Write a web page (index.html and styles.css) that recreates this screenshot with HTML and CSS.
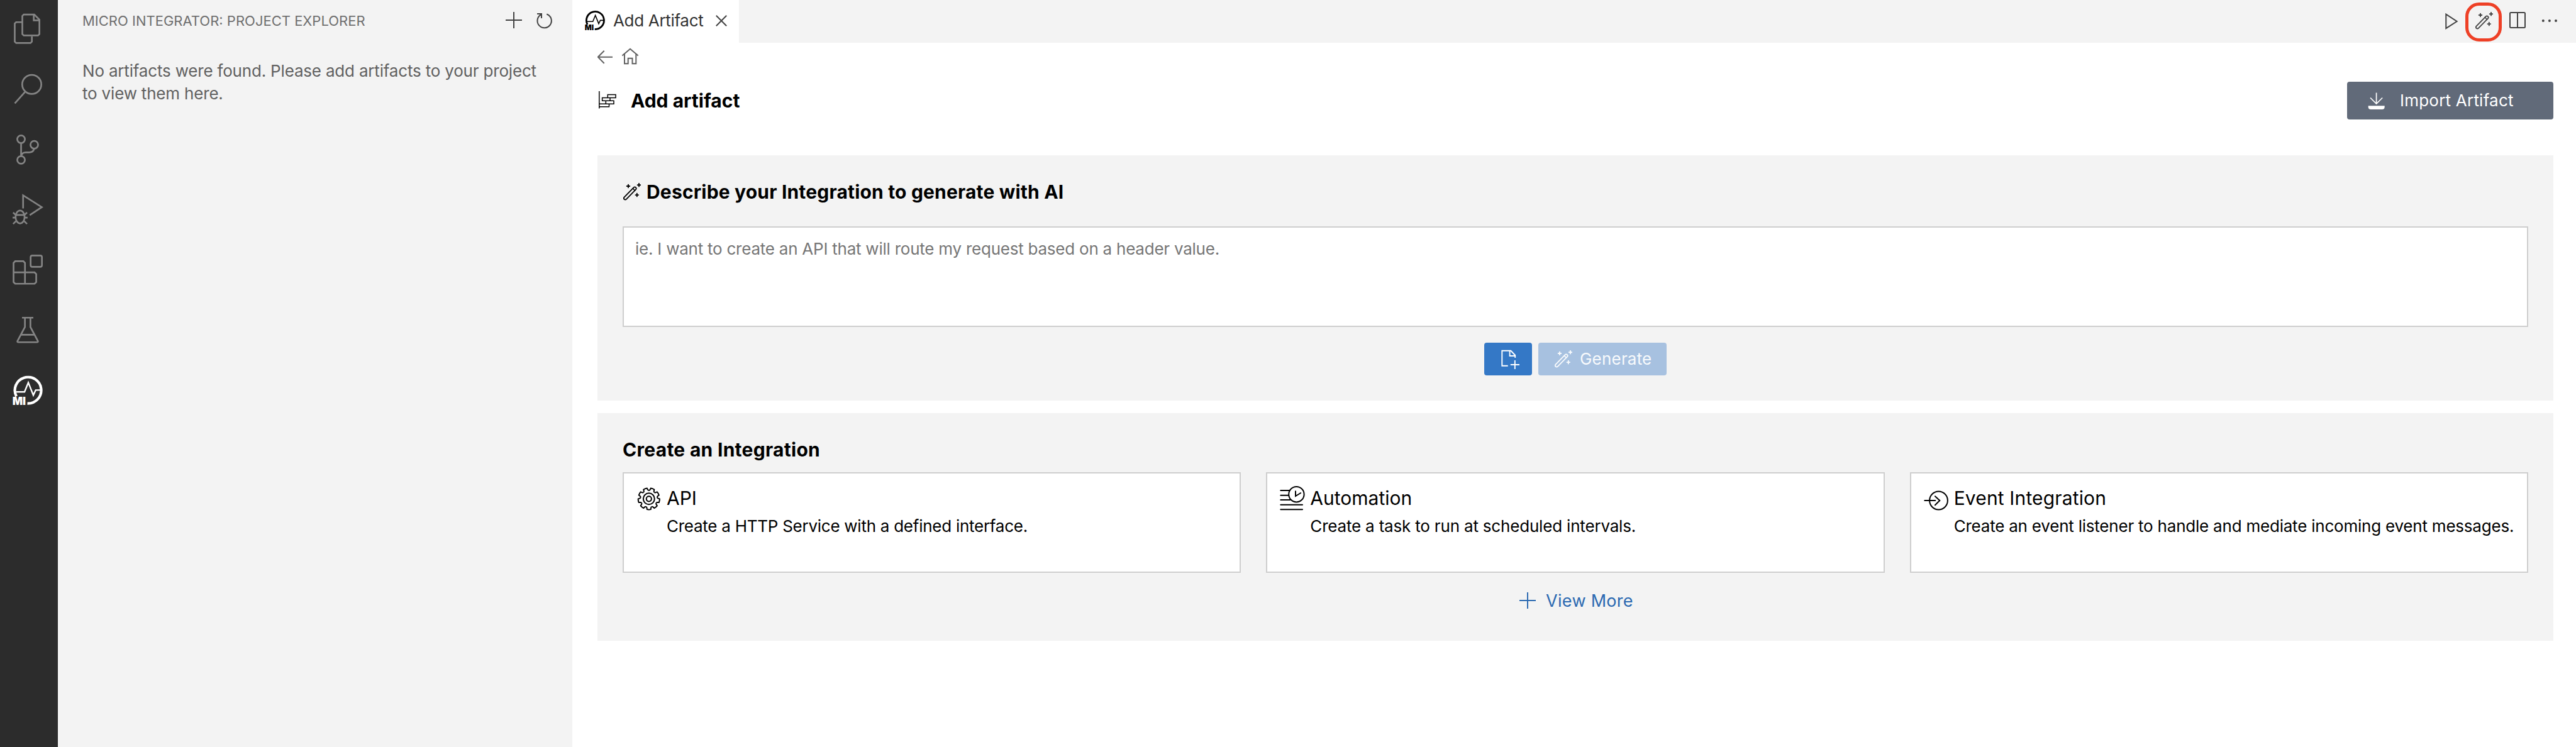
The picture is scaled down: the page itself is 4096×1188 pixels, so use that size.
FILE: index.html
```html
<!DOCTYPE html>
<html lang="en">
<head>
<meta charset="utf-8">
<title>Add Artifact</title>
<link rel="stylesheet" href="styles.css">
</head>
<body>
<svg class="defs" aria-hidden="true">
  <defs>
    <symbol id="wand" viewBox="0 0 28 28">
      <g fill="none" stroke="currentColor" stroke-linecap="round">
        <rect x="-2.3" y="-2.3" width="26.2" height="4.6" rx="2.3" transform="translate(3.2 24.2) rotate(-45.5)" stroke-width="1.8"/>
        <path d="M15.2 8.6L18.6 12" stroke-width="1.6"/>
        <path d="M8 2.7V7.3M5.7 5H10.3M25 .9V5.5M22.7 3.2H27.3M21.8 16.8V21.4M19.5 19.1H24.1" stroke-width="1.9"/>
      </g>
    </symbol>
    <symbol id="mi" viewBox="20 598.5 48 48">
      <g fill="none" stroke="currentColor">
        <path d="M26 631.5A21 21 0 1 1 43.5 642.7" stroke-width="4.2"/>
        <path d="M26 624.3H39L45 609.5L53 629.5L56.8 621.5H65" stroke-width="2.4"/>
      </g>
      <text class="mi-label" x="19.6" y="645" textLength="21.5" lengthAdjust="spacingAndGlyphs" fill="currentColor">MI</text>
    </symbol>
    <path id="tooth" d="M-4.6-12.6Q-3.7-13-3.4-13.9L-2.9-16.8Q0-17.5 2.9-16.8L3.4-13.9Q3.7-13 4.6-12.6"/>
  </defs>
</svg>
<div class="window">
  <nav class="activity">
    <svg viewBox="0 0 92 96"><path d="M35 35.3H25.6L23.4 37.5V66.4L25.6 68.6H48.5L50.7 66.4V58M35.5 25.4L37.7 23.2H54.5L62.7 31.4V54.3L60.5 56.5H37.7L35.5 54.3ZM53.7 23.2V32.5H62.7"/></svg>
    <svg viewBox="0 96 92 96"><circle cx="50.5" cy="134.3" r="15.2"/><path d="M40.5 145.5L23.5 164.5"/></svg>
    <svg viewBox="0 192 92 96"><circle cx="33.5" cy="221.5" r="6.1"/><circle cx="54.5" cy="230.3" r="6.1"/><circle cx="33.5" cy="254.5" r="6.1"/><path d="M33.5 227.6V248.4M54.3 236.5Q53 242.5 46.5 242.5H41Q35 242.5 33.8 248"/></svg>
    <svg viewBox="0 288 92 96"><path d="M36.7 332.7V311.7L66.5 330.5L47.3 343.2"/><ellipse cx="31.9" cy="346.2" rx="7.2" ry="10.3"/><path d="M24.7 343H39M20 347.3H24.5M39.2 347.3H43.8M20.8 339L25.5 343.4M43 339L38.3 343.4M20.8 357.3L25.7 352.5M43 357.3L38.1 352.5"/></svg>
    <svg viewBox="0 384 92 96"><rect x="48.7" y="407.4" width="18" height="18" rx="2.6"/><path d="M24.1 416.5H37.1L39.7 419.1V434.3H55L57.6 436.9V449.8L55 452.4H24.1L21.5 449.8V419.1ZM21.5 434.3H39.7V452.4"/></svg>
    <svg viewBox="0 480 92 96"><path d="M35 506.3H53M39.6 506.3V521.2L28 543Q26.8 545.4 29.3 545.4H58.7Q61.2 545.4 60 543L48.4 521.2V506.3M33.3 533.4H54.9"/></svg>
    <svg class="active" viewBox="0 576 92 96"><use href="#mi" x="20" y="598.5" width="48" height="48"/></svg>
  </nav>

  <aside class="sidebar">
    <header class="side-head">
      <h2>MICRO INTEGRATOR: PROJECT EXPLORER</h2>
      <div class="side-actions">
        <svg width="30" height="30" viewBox="804 18 30 30"><path d="M806 32H832M819 19V45"/></svg>
        <svg width="30" height="30" viewBox="854 18 30 30"><path d="M871.3 22.5A11.2 11.2 0 1 1 862.8 23M856 22H863V29"/></svg>
      </div>
    </header>
    <p class="side-text">No artifacts were found. Please add artifacts to your project <br>to view them here.</p>
  </aside>

  <main class="editor">
    <div class="tabs">
      <div class="tab">
        <svg class="tab-logo" width="32" height="32"><use href="#mi"/></svg>
        <span class="tab-title">Add Artifact</span>
        <svg class="tab-close" width="18" height="18" viewBox="0 0 18 18"><path d="M.8 .8L17.2 17.2M17.2 .8L.8 17.2"/></svg>
      </div>
      <div class="toolbar">
        <svg width="40" height="68" viewBox="3888 0 40 68"><path d="M3897.3 22.6V45.2L3914.6 34Z"/></svg>
        <span class="highlight"><svg width="28" height="28"><use href="#wand"/></svg></span>
        <svg class="split" width="40" height="68" viewBox="3991 0 40 68"><rect x="3999" y="20" width="24" height="24" rx="1.5"/><path d="M4011 20V44"/></svg>
        <svg class="dots" width="40" height="68" viewBox="4042 0 40 68"><circle cx="4051.8" cy="33" r="2"/><circle cx="4061.9" cy="33" r="2"/><circle cx="4072" cy="33" r="2"/></svg>
      </div>
    </div>

    <div class="page">
      <div class="crumbs">
        <svg width="24" height="30" viewBox="952 75 24 30"><path d="M976 90.7H953M962.7 80.7L952.8 90.7L962.7 100.7"/></svg>
        <svg width="28" height="30" viewBox="990 75 28 30"><path d="M991.4 88.6L1004 77.8L1016.7 88.6M995 86V101.2H1000.7V92.8H1007.5V101.2H1013.3V86"/></svg>
      </div>
      <div class="head">
        <svg width="32" height="30" viewBox="952 145 32 30"><path d="M954.8 145V172.5M968.3 150.4H981V155.4H968.3ZM959.6 155.4H972V160.3H959.6ZM965.3 160.3H978V165.3H965.3ZM954.8 165.3H970.5V169.8H954.8Z"/></svg>
        <h1>Add artifact</h1>
        <button class="btn import">
          <svg width="28" height="32" viewBox="3772 145 28 32"><path d="M3785.6 148.5V165.5M3776 156.5L3785.6 166L3795.2 156.5" fill="none" stroke="#fff" stroke-width="1.7"/><path d="M3772.7 169.2H3798.7V171Q3798.7 175 3794.7 175H3776.7Q3772.7 175 3772.7 171Z" fill="#fff"/></svg>
          <span>Import Artifact</span>
        </button>
      </div>

      <section class="panel ai">
        <h3 class="ai-title"><svg width="28" height="28"><use href="#wand"/></svg><span>Describe your Integration to generate with AI</span></h3>
        <div class="prompt">ie. I want to create an API that will route my request based on a header value.</div>
        <div class="actions">
          <button class="btn attach"><svg width="76" height="52" viewBox="2365 546 76 52"><path d="M2402.7 582.8H2393.3V558.8H2407.3L2414.2 566V570M2405.6 558.8V567H2414.2M2413.8 574V588M2406.8 581H2421"/></svg></button>
          <button class="btn generate"><svg width="28" height="28"><use href="#wand"/></svg><span>Generate</span></button>
        </div>
      </section>

      <section class="panel create">
        <h3>Create an Integration</h3>
        <div class="cards">
          <article class="card">
            <svg width="40" height="40" viewBox="1014 775 40 40"><g transform="translate(1033.8 795.3)"><circle r="9"/><circle r="4.1"/><use href="#tooth" transform="rotate(20)"/><use href="#tooth" transform="rotate(60)"/><use href="#tooth" transform="rotate(100)"/><use href="#tooth" transform="rotate(140)"/><use href="#tooth" transform="rotate(180)"/><use href="#tooth" transform="rotate(220)"/><use href="#tooth" transform="rotate(260)"/><use href="#tooth" transform="rotate(300)"/><use href="#tooth" transform="rotate(340)"/></g></svg>
            <div><h4>API</h4><p class="d-api">Create a HTTP Service with a defined interface.</p></div>
          </article>
          <article class="card">
            <svg width="40" height="40" viewBox="2039 775 40 40"><path d="M2040.3 782H2055M2040.3 789.7H2053M2040.3 797H2055.5M2040.3 804.7H2075M2040.3 812.2H2075M2064 783.3V791L2072.2 786" stroke-linecap="round"/><circle cx="2065.4" cy="788.2" r="12.2"/></svg>
            <div><h4>Automation</h4><p class="d-auto">Create a task to run at scheduled intervals.</p></div>
          </article>
          <article class="card">
            <svg width="40" height="40" viewBox="3064.7 775 40 40"><circle cx="3088.2" cy="798" r="14.4"/><path d="M3066 798H3083M3082.6 791.2L3090 798L3082.6 805.3" stroke-linecap="round"/></svg>
            <div><h4 class="t-event">Event Integration</h4><p class="d-event">Create an event listener to handle and mediate incoming event messages.</p></div>
          </article>
        </div>
        <a class="more"><svg width="28" height="28" viewBox="0 0 28 28"><path d="M1 13H27M14 0V26"/></svg><span>View More</span></a>
      </section>
    </div>
  </main>
</div>
</body>
</html>
```
FILE: styles.css
```css
* { box-sizing: border-box; }
body, h1, h2, h3, h4, p { margin: 0; font-weight: 400; }
body { font: 26px/36px Inter, "Liberation Sans", sans-serif; background: #fff; color: #000; }
svg { display: block; flex: none; }
span, h1, h2, h3, h4 { white-space: nowrap; }
.defs { position: absolute; width: 0; height: 0; }
.mi-label { font: 900 17.2px Inter, sans-serif; }

.window { display: flex; width: 4096px; height: 1188px; overflow: hidden; }

.activity { width: 92px; flex: none; background: #2c2c2c; color: #848484; }
.activity svg { width: 92px; height: 95.8px; fill: none; stroke: currentColor; stroke-width: 2.7; }
.activity .active { color: #fff; stroke: none; }

.sidebar { width: 818px; flex: none; background: #f3f3f3; }
.side-head { display: flex; align-items: center; justify-content: space-between; height: 66px; padding: 0 28px 0 39px; }
.side-head h2 { font-size: 22px; color: #6f6f6f; }
.side-actions { display: flex; gap: 20px; }
.side-actions svg { fill: none; stroke: #424242; stroke-width: 2; }
.side-text { margin: 28.5px 0 0 39px; color: #616161; letter-spacing: -.185px; white-space: nowrap; }

.editor { flex: 1; min-width: 0; }
.tabs { display: flex; height: 68px; background: #f3f3f3; }
.tab { display: flex; align-items: center; width: 265px; padding: 0 19px 2px 20px; background: #fff; }
.tab-logo { color: #000; }
.tab-title { margin-left: 13px; letter-spacing: -.32px; color: #333; }
.tab-close { margin-left: auto; stroke: #424242; stroke-width: 2; }
.toolbar { display: flex; margin-left: auto; padding-right: 22px; fill: none; stroke: #424242; stroke-width: 2; }
.highlight { width: 58px; height: 62px; margin-top: 4px; padding: 10px 0 0 11px; border: 5px solid #ee4026; border-radius: 22px; color: #424242; }
.split { margin-left: 5px; }
.dots { margin-left: 11px; fill: #424242; stroke: none; }

.page { padding: 7px 36px 0 40px; }
.crumbs { display: flex; gap: 14px; fill: none; stroke: #616161; stroke-width: 2; }
.head { display: flex; align-items: center; height: 60px; margin-top: 25px; }
.head > svg { fill: none; stroke: #000; stroke-width: 1.5; }
.head h1 { margin-left: 21px; font-size: 30px; font-weight: 700; }
.btn { display: flex; align-items: center; padding: 0; border: 0; border-radius: 4px; font: inherit; color: #fff; }
.import { width: 328px; height: 60px; margin-left: auto; padding-left: 33px; gap: 23px; background: #616a79; letter-spacing: .22px; }

.panel { padding: 40px 40px 0; background: #f3f3f3; }
.panel h3 { font-size: 30px; font-weight: 700; }
.ai { height: 390px; margin-top: 57px; }
.panel .ai-title { display: flex; align-items: center; gap: 9px; padding-left: 1px; line-height: 37px; letter-spacing: .18px; }
.ai-title svg { margin-bottom: 2px; }
.prompt { height: 160px; margin-top: 36px; padding: 17px 18px; border: 2px solid #cecece; background: #fff; line-height: 34px; letter-spacing: -.235px; color: #767676; }
.actions { display: flex; justify-content: center; gap: 10px; margin-top: 25px; }
.attach { width: 76px; height: 52px; background: #3478c6; fill: none; stroke: #fff; stroke-width: 1.9; }
.generate { width: 204px; height: 52px; padding-left: 26px; gap: 12px; background: #a7c1e0; letter-spacing: .2px; color: #f8fafc; }

.create { height: 362px; margin-top: 20px; }
.create h3 { letter-spacing: .28px; }
.cards { display: grid; grid-template-columns: repeat(3, 1fr); gap: 40px; margin-top: 18px; }
.card { display: flex; gap: 8px; height: 160px; padding: 20px; border: 2px solid #cecece; background: #fff; }
.card svg { fill: none; stroke: #000; stroke-width: 2; }
.card h4 { margin-top: 1px; font-size: 30px; }
.card .t-event { letter-spacing: .15px; }
.card p { margin-top: 10.5px; line-height: 32px; white-space: nowrap; }
.d-api { letter-spacing: -.26px; }
.d-auto { letter-spacing: -.185px; }
.card .d-event { margin-right: -20px; letter-spacing: -.215px; }
.more { display: flex; justify-content: center; align-items: center; gap: 15px; height: 28px; margin-top: 30.5px; padding-left: 2px; font-size: 27px; letter-spacing: .3px; color: #2b69b1; }
.more svg { fill: none; stroke: #2b69b1; stroke-width: 2; }
```
